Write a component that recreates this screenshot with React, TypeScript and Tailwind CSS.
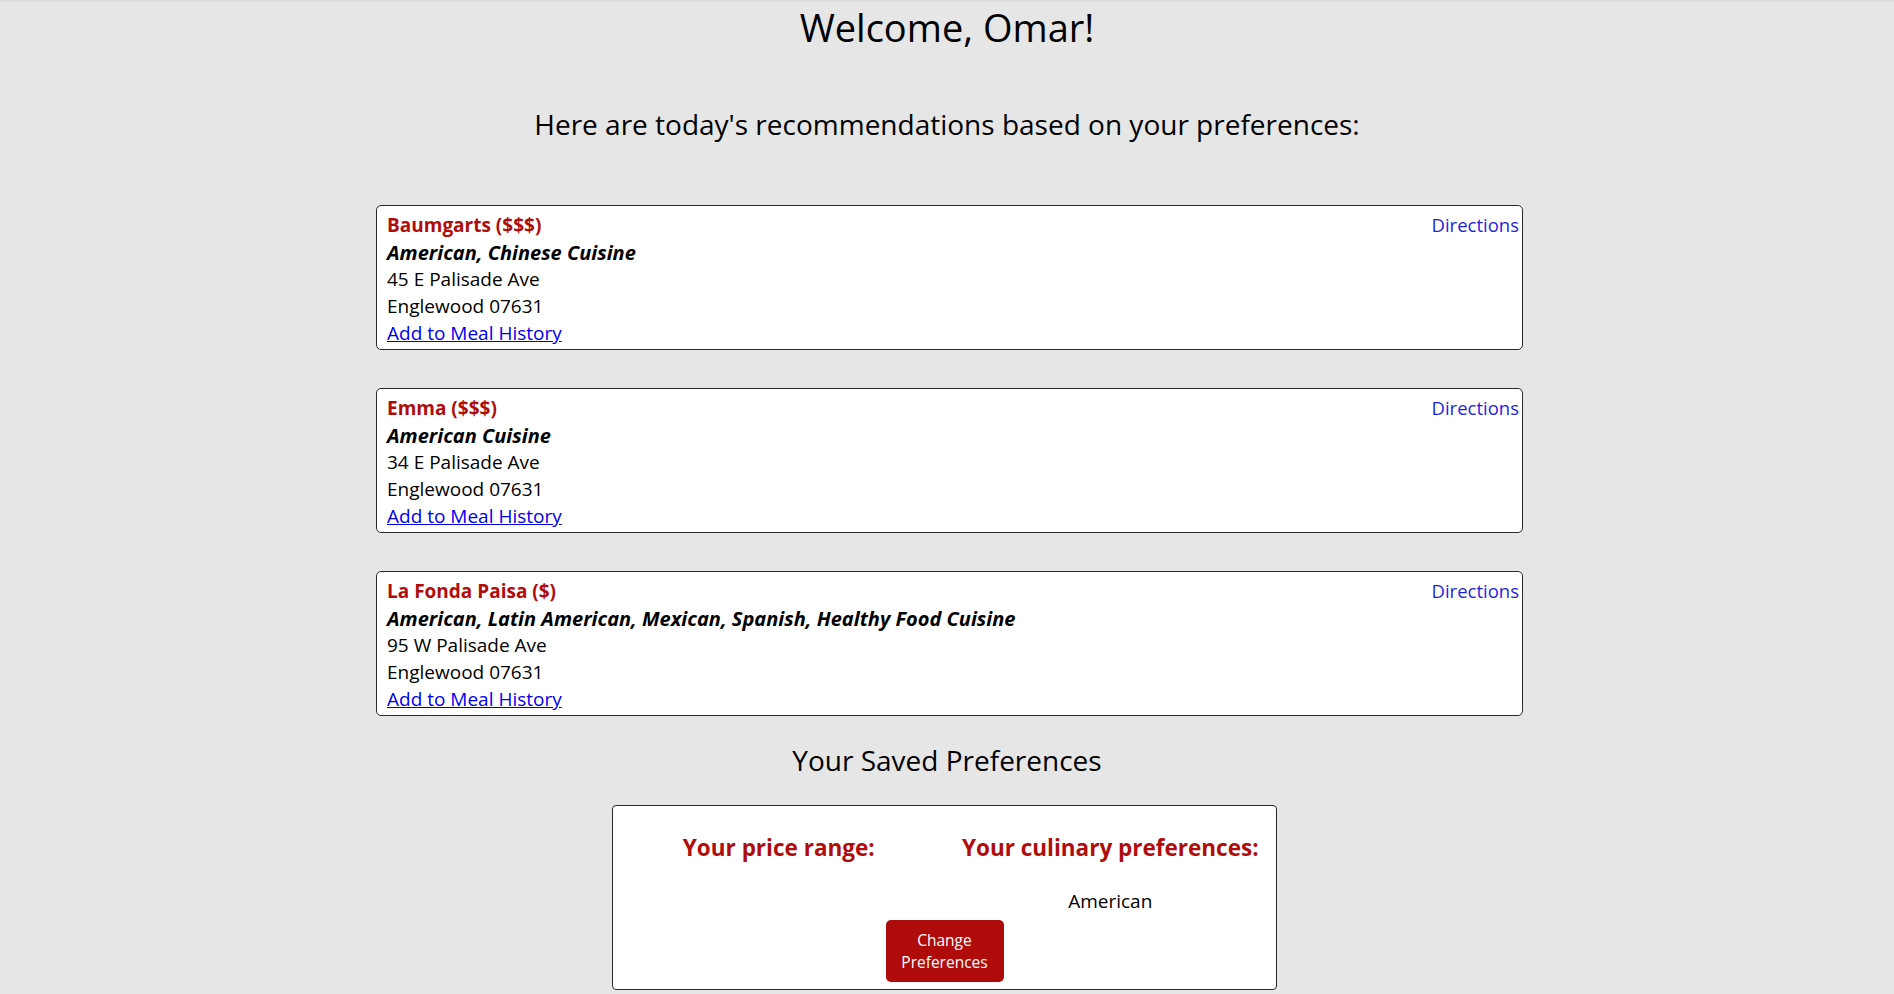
const restaurants = [
  {
    name: 'Baumgarts ($$$)',
    cuisine: 'American, Chinese Cuisine',
    street: '45 E Palisade Ave',
    city: 'Englewood 07631'
  },
  {
    name: 'Emma ($$$)',
    cuisine: 'American Cuisine',
    street: '34 E Palisade Ave',
    city: 'Englewood 07631'
  },
  {
    name: 'La Fonda Paisa ($)',
    cuisine: 'American, Latin American, Mexican, Spanish, Healthy Food Cuisine',
    street: '95 W Palisade Ave',
    city: 'Englewood 07631'
  }
];

function RestaurantCard({ r }: { r: (typeof restaurants)[number] }) {
  return (
    <div className="mx-auto w-[1147px] rounded-[5px] border border-[#2a2a2a] bg-white pb-[2px] pl-[10px] pr-[3px] pt-[5px] text-[19px] leading-[27px]">
      <div className="flex items-baseline justify-between">
        <span className="font-bold text-[#b00c0c]">{r.name}</span>
        <a href="#" className="text-[18.5px] text-[#1f1fe0]">
          Directions
        </a>
      </div>
      <div className="text-[20px] font-bold italic">{r.cuisine}</div>
      <div>{r.street}</div>
      <div>{r.city}</div>
      <a href="#" className="text-[#0000ee] underline">
        Add to Meal History
      </a>
    </div>
  );
}

export default function App() {
  return (
    <div className="min-h-screen border-t-2 border-[#dcdce0] bg-[#e6e6e6] font-['Open_Sans',sans-serif] text-black">
      <h1 className="text-center text-[38px] leading-[50px]">Welcome, Omar!</h1>

      <h2 className="mt-[54px] text-center text-[28px] leading-[36px]">
        Here are today's recommendations based on your preferences:
      </h2>

      <div className="mt-[63px] flex flex-col gap-[38px] pl-[5px]">
        {restaurants.map(r => (
          <RestaurantCard key={r.name} r={r} />
        ))}
      </div>

      <h2 className="mt-[26px] text-center text-[28px] leading-[36px]">
        Your Saved Preferences
      </h2>

      <div className="pr-[5px]">
        <div className="mx-auto mt-[27px] w-[665px] rounded-[4px] border border-[#2a2a2a] bg-white pb-[7px] pt-[26px]">
          <div className="grid grid-cols-2 text-center">
            <div className="text-[22.5px] font-bold leading-[32px] text-[#b00c0c]">
              Your price range:
            </div>
            <div className="text-[22.5px] font-bold leading-[32px] text-[#b00c0c]">
              Your culinary preferences:
            </div>
            <div></div>
            <div className="mt-[24px] text-[19px] leading-[27px]">American</div>
          </div>
          <div className="mt-[5px] flex justify-center">
            <button className="w-[118px] rounded-[5px] bg-[#b00b0b] py-[9px] text-[15.5px] leading-[22px] text-white">
              Change Preferences
            </button>
          </div>
        </div>
      </div>
    </div>
  );
}
